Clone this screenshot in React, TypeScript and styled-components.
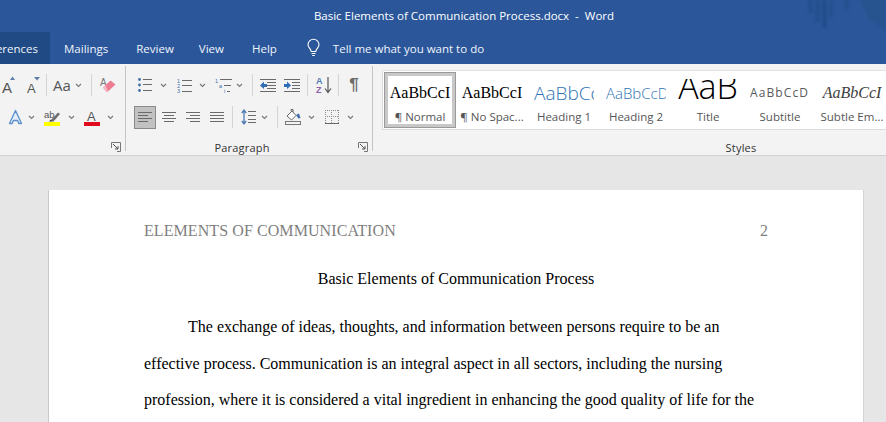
import React from 'react'
import styled, { createGlobalStyle } from 'styled-components'

const GlobalStyle = createGlobalStyle`
  html, body {
    margin: 0;
    padding: 0;
    height: 422px;
    overflow: hidden;
  }
  body {
    font-family: "Open Sans", "Noto Sans", sans-serif;
  }
`

const Window = styled.div`
  display: flex;
  flex-direction: column;
  position: relative;
  width: 886px;
  height: 422px;
  overflow: hidden;
  background: #e6e6e6;
`

const TitleBar = styled.div`
  display: flex;
  justify-content: center;
  align-items: center;
  height: 32px;
  box-sizing: border-box;
  padding: 0 0 1px 42px;
  background: #2b579a;
  color: #fff;
  font-size: 11.5px;
  white-space: pre;
`

const Backdrop = styled.svg`
  position: absolute;
  top: 0;
  left: 800px;
  filter: blur(1px);
`

const TabBar = styled.div`
  display: flex;
  align-items: stretch;
  height: 32px;
  background: #2b579a;
  color: #f0f4fa;
  font-size: 11.5px;
`

const ActiveTab = styled.div`
  display: flex;
  justify-content: flex-end;
  align-items: center;
  width: 50px;
  padding-right: 12px;
  box-sizing: border-box;
  overflow: hidden;
  background: #1f4a84;
  white-space: nowrap;
`

const Tab = styled.div<{ $ml: number }>`
  display: flex;
  align-items: center;
  margin-left: ${(p) => p.$ml}px;
`

const Ribbon = styled.div`
  display: flex;
  height: 92px;
  overflow: hidden;
  background: #f3f3f3;
  border-bottom: 1px solid #d2d2d2;
  box-sizing: border-box;
`

const Group = styled.div<{ $w: number; $divider?: boolean }>`
  display: flex;
  flex-direction: column;
  flex: none;
  width: ${(p) => p.$w}px;
  box-sizing: border-box;
  margin: 2px 0 4px;
  padding-top: 7px;
  border-right: ${(p) => (p.$divider ? '1px solid #c4c4c4' : 'none')};
`

const Row = styled.div`
  display: flex;
  align-items: center;
  flex: none;
  height: 24px;
  margin-bottom: 8px;
  color: #5c5c5c;
`

const Slot = styled.div<{ $w: number; $ml: number }>`
  display: flex;
  justify-content: center;
  align-items: center;
  flex: none;
  width: ${(p) => p.$w}px;
  margin-left: ${(p) => p.$ml}px;
`

const SelectedSlot = styled(Slot)`
  height: 23px;
  background: #c1c1c1;
  border: 1px solid #8a8a8a;
  box-sizing: border-box;
`

const Sep = styled.div<{ $ml: number }>`
  flex: none;
  width: 1px;
  height: 22px;
  margin-left: ${(p) => p.$ml}px;
  background: #d4d4d4;
`

const CaseText = styled.span`
  font-size: 15px;
  color: #555;
`

const Pilcrow = styled.span`
  font-family: "Liberation Sans", sans-serif;
  font-size: 17px;
  font-weight: 700;
  color: #6b6b6b;
`

const GroupFooter = styled.div`
  display: flex;
  align-items: center;
  flex: none;
  height: 14px;
  margin-top: 3px;
  padding-right: 4px;
`

const GroupLabel = styled.span`
  flex: 1;
  text-align: center;
  font-size: 11px;
  letter-spacing: 0.2px;
  color: #333;
`

const Gallery = styled.div`
  display: flex;
  flex: none;
  height: 60px;
  margin: -3px 0 7px 9px;
  padding: 1px 0 1px 1px;
  box-sizing: border-box;
  background: #fff;
  border-top: 1px solid #e2e2e2;
  border-bottom: 1px solid #dcdcdc;
  border-left: 1px solid #dcdcdc;
`

const StyleTile = styled.div<{ $selected?: boolean }>`
  display: flex;
  flex-direction: column;
  align-items: center;
  flex: none;
  width: 72px;
  height: 56px;
  box-sizing: border-box;
  padding-top: ${(p) => (p.$selected ? '3px' : '7px')};
  border: ${(p) => (p.$selected ? '4px solid #c8c8c8' : 'none')};
  outline: ${(p) => (p.$selected ? '1px solid #9a9a9a' : 'none')};
  outline-offset: -1px;
`

const Preview = styled.div<{
  $font: string
  $size: number
  $color: string
  $italic?: boolean
  $light?: boolean
  $spacing?: number
  $lh?: number
}>`
  width: 60px;
  height: 27px;
  flex: none;
  display: flex;
  justify-content: center;
  overflow: hidden;
  white-space: nowrap;
  font-family: ${(p) => p.$font};
  font-size: ${(p) => p.$size}px;
  font-style: ${(p) => (p.$italic ? 'italic' : 'normal')};
  font-weight: ${(p) => (p.$light ? 300 : 400)};
  letter-spacing: ${(p) => p.$spacing ?? 0}px;
  line-height: ${(p) => p.$lh ?? 28}px;
  color: ${(p) => p.$color};
`

const PreviewClipped = styled(Preview)`
  justify-content: flex-start;
`

const TileLabel = styled.div`
  margin-top: 3px;
  font-size: 11.5px;
  line-height: 16px;
  color: #555;
  white-space: nowrap;
`

const Workspace = styled.div`
  flex: 1;
  display: flex;
  justify-content: flex-start;
  min-height: 0;
  padding: 34px 0 0 48px;
`

const Page = styled.div`
  width: 816px;
  height: 400px;
  flex: none;
  box-sizing: border-box;
  padding: 31px 95px 0;
  background: #fff;
  border-left: 1px solid #c8c8c8;
  border-right: 1px solid #d4d4d4;
  font-family: "Liberation Serif", "Times New Roman", serif;
  font-size: 16px;
  color: #000;
`

const RunningHeader = styled.div`
  display: flex;
  justify-content: space-between;
  line-height: 20px;
  letter-spacing: 0.08px;
  color: #7f7f7f;
`

const DocTitle = styled.div`
  margin-top: 28px;
  line-height: 20px;
  text-align: center;
`

const Paragraph = styled.p`
  margin: 20px 0 0;
  line-height: 36.5px;
  text-indent: 44px;
`

const Glyph = styled.svg`
  display: block;
  overflow: visible;
`

const GlyphText = styled.text`
  font-family: "Liberation Sans", sans-serif;
`

const BLUE = '#4f7cb5'
const GRAY = '#6a6a6a'

const Chevron = () => (
  <Glyph width="7" height="5" viewBox="0 0 7 5">
    <path d="M1 1 3.5 3.5 6 1" fill="none" stroke="#777" strokeWidth="1.1" />
  </Glyph>
)

const Launcher = () => (
  <Glyph width="10" height="10" viewBox="0 0 10 10">
    <path d="M.5 6V.5H9.5V9.5H6" fill="none" stroke="#777" />
    <path d="M2 2 7 7M7 4V7H4" fill="none" stroke="#555" />
  </Glyph>
)

const Bulb = () => (
  <Glyph width="13" height="18" viewBox="0 0 13 18">
    <path
      d="M4.2 12.5C4 10 1 8.6 1 5.8A5.5 5.5 0 0 1 12 5.8C12 8.6 9 10 8.8 12.5Z"
      fill="none"
      stroke="#fff"
      strokeWidth="1.1"
    />
    <path d="M4.5 14.5H8.5M5.2 16.5H7.8" stroke="#fff" strokeWidth="1.1" />
  </Glyph>
)

const GrowFont = () => (
  <Glyph width="14" height="18" viewBox="0 0 14 18">
    <GlyphText x="0" y="17" fontSize="15" fill="#555">A</GlyphText>
    <path d="M8 4 10.5 .5 13 4Z" fill="#5f7fa8" />
  </Glyph>
)

const ShrinkFont = () => (
  <Glyph width="13" height="18" viewBox="0 0 13 18">
    <GlyphText x="0" y="17" fontSize="13" fill="#555">A</GlyphText>
    <path d="M7 1H13L10 4.5Z" fill="#5f7fa8" />
  </Glyph>
)

const Eraser = () => (
  <Glyph width="16" height="18" viewBox="0 0 16 18">
    <GlyphText x="0" y="10" fontSize="10" fill="#777">A</GlyphText>
    <path d="M3 11.5 10.5 4.5 15.5 8.5 8 15.5 6 15.5Z" fill="#ee7d93" />
    <path d="M3 11.5 6 15.5H8L5.5 9.2Z" fill="#f6b9c6" />
  </Glyph>
)

const TextEffect = () => (
  <Glyph width="15" height="16" viewBox="0 0 15 16">
    <path
      d="M7.5 1.5 13.5 14.5H10.8L9.6 11.5H5.4L4.2 14.5H1.5Z"
      fill="#e3eefa"
      stroke="#5b8fcb"
      strokeWidth="1.3"
      strokeLinejoin="round"
    />
  </Glyph>
)

const Highlight = () => (
  <Glyph width="17" height="17" viewBox="0 0 17 17">
    <GlyphText x="0" y="9" fontSize="9.5" fill="#555">ab</GlyphText>
    <path d="M7 11 14 3.5 16 5 9.5 12.5Z" fill="#6d6d6d" />
    <path d="M5 12.5 7 10.5 9 12.5Z" fill="#333" />
    <rect x="0" y="13" width="16" height="4" fill="#ffff00" />
  </Glyph>
)

const FontColor = () => (
  <Glyph width="16" height="17" viewBox="0 0 16 17">
    <GlyphText x="3" y="12" fontSize="13" fill="#555">A</GlyphText>
    <rect x="0" y="13" width="16" height="4" fill="#e00b1c" />
  </Glyph>
)

const Lines = ({ rows }: { rows: [number, number, number][] }) => (
  <>
    {rows.map(([x1, x2, y]) => (
      <line key={`${x1}-${y}`} x1={x1} x2={x2} y1={y + 0.5} y2={y + 0.5} stroke={GRAY} />
    ))}
  </>
)

const Bullets = () => (
  <Glyph width="14" height="14" viewBox="0 0 14 14">
    <circle cx="1.5" cy="1.5" r="1.4" fill="#3f6ea8" />
    <circle cx="1.5" cy="7" r="1.4" fill="#3f6ea8" />
    <circle cx="1.5" cy="12.5" r="1.4" fill="#3f6ea8" />
    <Lines rows={[[5, 14, 1], [5, 14, 6], [5, 14, 12]]} />
  </Glyph>
)

const Numbering = () => (
  <Glyph width="15" height="15" viewBox="0 0 15 15">
    <GlyphText x="0" y="5" fontSize="5.5" fill="#3f6ea8">1</GlyphText>
    <GlyphText x="0" y="10" fontSize="5.5" fill="#3f6ea8">2</GlyphText>
    <GlyphText x="0" y="15" fontSize="5.5" fill="#3f6ea8">3</GlyphText>
    <Lines rows={[[5, 15, 2], [5, 15, 7], [5, 15, 13]]} />
  </Glyph>
)

const Multilevel = () => (
  <Glyph width="17" height="15" viewBox="0 0 17 15">
    <GlyphText x="0" y="5" fontSize="5.5" fill="#3f6ea8">1</GlyphText>
    <GlyphText x="4" y="10" fontSize="5.5" fill="#3f6ea8">a</GlyphText>
    <GlyphText x="9" y="15" fontSize="5.5" fill="#3f6ea8">i</GlyphText>
    <Lines rows={[[5, 17, 1], [9, 16, 7], [12, 15, 13]]} />
  </Glyph>
)

const Indent = ({ flip }: { flip?: boolean }) => (
  <Glyph width="16" height="13" viewBox="0 0 16 13">
    <Lines
      rows={
        flip
          ? [[0, 16, 0], [8, 16, 3], [8, 16, 6], [8, 16, 9], [0, 16, 12]]
          : [[0, 16, 0], [7, 16, 3], [7, 16, 6], [7, 16, 9], [0, 16, 12]]
      }
    />
    {flip ? (
      <path d="M0 5H3V2.5L7 6.5 3 10V8H0Z" fill="#2f6db5" />
    ) : (
      <path d="M7 5H4V2.5L0 6.5 4 10V8H7Z" fill="#2f6db5" />
    )}
  </Glyph>
)

const Sort = () => (
  <Glyph width="16" height="18" viewBox="0 0 16 18">
    <GlyphText x="0" y="8" fontSize="9" fontWeight="700" fill="#4f7cb5">A</GlyphText>
    <GlyphText x="0" y="17" fontSize="9" fontWeight="700" fill="#8d5fa8">Z</GlyphText>
    <path d="M12 1V16M9 12.5 12 16.5 15 12.5" fill="none" stroke="#555" strokeWidth="1.2" />
  </Glyph>
)

const Align = ({ rows }: { rows: [number, number, number][] }) => (
  <Glyph width="14" height="11" viewBox="0 0 14 11">
    <Lines rows={rows} />
  </Glyph>
)

const LineSpacing = () => (
  <Glyph width="15" height="16" viewBox="0 0 15 16">
    <path d="M3 1V15M.8 4 3 1 5.2 4M.8 12 3 15 5.2 12" fill="none" stroke={BLUE} strokeWidth="1.3" />
    <Lines rows={[[7, 15, 2], [7, 15, 6], [7, 15, 10], [7, 15, 13]]} />
  </Glyph>
)

const Shading = () => (
  <Glyph width="16" height="16" viewBox="0 0 16 16">
    <path d="M2 7 7 2 11 6.5 6.5 11Z" fill="#fff" stroke="#666" />
    <path d="M6 2V0.5H8V3" fill="none" stroke="#666" />
    <path d="M11 6 14 4.5 15.5 9 13.5 9.5Z" fill="#3f6ea8" />
    <rect x=".5" y="12.5" width="15" height="3" fill="#f3f3f3" stroke="#777" />
  </Glyph>
)

// outer and inner edges are dotted, only the bottom edge is solid
const Borders = () => (
  <Glyph width="14" height="14" viewBox="0 0 14 14" shapeRendering="crispEdges">
    <path
      d="M0 .5H14M0 6.5H14M.5 0V13M6.5 0V13M13.5 0V13"
      fill="none"
      stroke="#8c8c8c"
      strokeDasharray="1 1"
    />
    <path d="M0 13.5H14" stroke="#666" />
  </Glyph>
)

const SERIF = '"Liberation Serif", serif'
const SANS = '"Open Sans", sans-serif'

const tiles = [
  { label: '¶ Normal', text: 'AaBbCcI', font: SERIF, size: 16, color: '#000', selected: true },
  { label: '¶ No Spac...', text: 'AaBbCcI', font: SERIF, size: 16, color: '#000' },
  { label: 'Heading 1', text: 'AaBbCc', font: SANS, size: 19, color: '#2e74b5', light: true, clip: true },
  { label: 'Heading 2', text: 'AaBbCcD', font: SANS, size: 15, color: '#2e74b5', light: true, clip: true },
  { label: 'Title', text: 'AaB', font: SANS, size: 34, color: '#000', lh: 15, light: true },
  { label: 'Subtitle', text: 'AaBbCcD', font: SANS, size: 12, color: '#5a5a5a', spacing: 1.1, clip: true },
  { label: 'Subtle Em...', text: 'AaBbCcI', font: SERIF, size: 16, color: '#404040', italic: true },
]

export default function App() {
  return (
    <Window>
      <GlobalStyle />
      <TitleBar>Basic Elements of Communication Process.docx  -  Word</TitleBar>
      <Backdrop width="86" height="32" viewBox="0 0 86 32">
        <rect x="8" y="0" width="5" height="13" fill="#24508f" />
        <rect x="15" y="0" width="5" height="22" fill="#24508f" />
        <rect x="22" y="0" width="5" height="28" fill="#234e8c" />
        <rect x="29" y="0" width="4" height="18" fill="#25518f" />
        <rect x="44" y="0" width="5" height="10" fill="#25518f" />
        <path d="M60 0H86V30L70 20Z" fill="#27538f" />
      </Backdrop>

      <TabBar>
        <ActiveTab>References</ActiveTab>
        <Tab $ml={14}>Mailings</Tab>
        <Tab $ml={28}>Review</Tab>
        <Tab $ml={25}>View</Tab>
        <Tab $ml={28}>Help</Tab>
        <Tab $ml={30}><Bulb /></Tab>
        <Tab $ml={13}>Tell me what you want to do</Tab>
      </TabBar>

      <Ribbon>
        <Group $w={126} $divider>
          <Row>
            <Slot $w={14} $ml={2}><GrowFont /></Slot>
            <Slot $w={13} $ml={11}><ShrinkFont /></Slot>
            <Sep $ml={6} />
            <Slot $w={16} $ml={7}><CaseText>Aa</CaseText></Slot>
            <Slot $w={8} $ml={4}><Chevron /></Slot>
            <Sep $ml={9} />
            <Slot $w={16} $ml={8}><Eraser /></Slot>
          </Row>
          <Row>
            <Slot $w={15} $ml={8}><TextEffect /></Slot>
            <Slot $w={8} $ml={4}><Chevron /></Slot>
            <Slot $w={17} $ml={9}><Highlight /></Slot>
            <Slot $w={8} $ml={6}><Chevron /></Slot>
            <Slot $w={16} $ml={9}><FontColor /></Slot>
            <Slot $w={8} $ml={6}><Chevron /></Slot>
          </Row>
          <GroupFooter>
            <GroupLabel />
            <Launcher />
          </GroupFooter>
        </Group>

        <Group $w={247} $divider>
          <Row>
            <Slot $w={14} $ml={12}><Bullets /></Slot>
            <Slot $w={8} $ml={7}><Chevron /></Slot>
            <Slot $w={15} $ml={10}><Numbering /></Slot>
            <Slot $w={8} $ml={6}><Chevron /></Slot>
            <Slot $w={17} $ml={9}><Multilevel /></Slot>
            <Slot $w={8} $ml={3}><Chevron /></Slot>
            <Sep $ml={9} />
            <Slot $w={16} $ml={7}><Indent /></Slot>
            <Slot $w={16} $ml={8}><Indent flip /></Slot>
            <Sep $ml={7} />
            <Slot $w={16} $ml={8}><Sort /></Slot>
            <Sep $ml={6} />
            <Slot $w={12} $ml={9}><Pilcrow>¶</Pilcrow></Slot>
          </Row>
          <Row>
            <SelectedSlot $w={22} $ml={8}>
              <Align rows={[[0, 14, 0], [0, 10, 3], [0, 14, 6], [0, 10, 9]]} />
            </SelectedSlot>
            <Slot $w={14} $ml={6}>
              <Align rows={[[0, 14, 0], [2, 12, 3], [0, 14, 6], [2, 12, 9]]} />
            </Slot>
            <Slot $w={14} $ml={10}>
              <Align rows={[[0, 14, 0], [4, 14, 3], [0, 14, 6], [4, 14, 9]]} />
            </Slot>
            <Slot $w={14} $ml={10}>
              <Align rows={[[0, 14, 0], [0, 14, 3], [0, 14, 6], [0, 14, 9]]} />
            </Slot>
            <Sep $ml={8} />
            <Slot $w={15} $ml={8}><LineSpacing /></Slot>
            <Slot $w={8} $ml={4}><Chevron /></Slot>
            <Sep $ml={9} />
            <Slot $w={16} $ml={7}><Shading /></Slot>
            <Slot $w={8} $ml={6}><Chevron /></Slot>
            <Slot $w={14} $ml={10}><Borders /></Slot>
            <Slot $w={8} $ml={7}><Chevron /></Slot>
          </Row>
          <GroupFooter>
            <GroupLabel>Paragraph</GroupLabel>
            <Launcher />
          </GroupFooter>
        </Group>

        <Group $w={740}>
          <Gallery>
            {tiles.map((t) => {
              const Box = t.clip ? PreviewClipped : Preview
              return (
                <StyleTile key={t.label} $selected={t.selected}>
                  <Box
                    $font={t.font}
                    $size={t.size}
                    $color={t.color}
                    $italic={t.italic}
                    $light={t.light}
                    $spacing={t.spacing}
                    $lh={t.lh}
                  >
                    {t.text}
                  </Box>
                  <TileLabel>{t.label}</TileLabel>
                </StyleTile>
              )
            })}
          </Gallery>
          <GroupFooter>
            <GroupLabel>Styles</GroupLabel>
          </GroupFooter>
        </Group>
      </Ribbon>

      <Workspace>
        <Page>
          <RunningHeader>
            <span>ELEMENTS OF COMMUNICATION</span>
            <span>2</span>
          </RunningHeader>
          <DocTitle>Basic Elements of Communication Process</DocTitle>
          <Paragraph>
            The exchange of ideas, thoughts, and information between persons require to be an
            effective process. Communication is an integral aspect in all sectors, including the
            nursing profession, where it is considered a vital ingredient in enhancing the good
            quality of life for the
          </Paragraph>
        </Page>
      </Workspace>
    </Window>
  )
}
